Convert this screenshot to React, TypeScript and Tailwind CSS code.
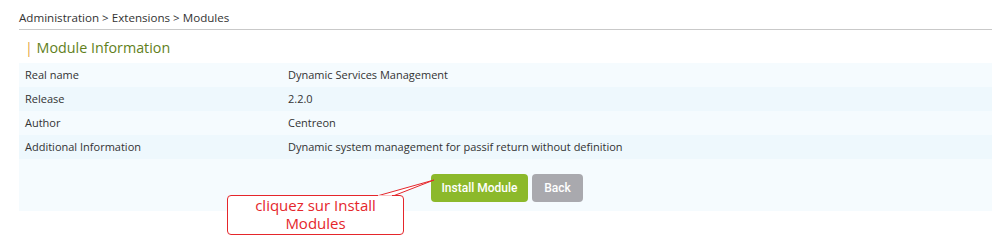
const rows = [
  { label: 'Real name', value: 'Dynamic Services Management' },
  { label: 'Release', value: '2.2.0' },
  { label: 'Author', value: 'Centreon' },
  { label: 'Additional Information', value: 'Dynamic system management for passif return without definition' },
];

export default function App() {
  return (
    <div className="relative w-[1002px] h-[241px] bg-white overflow-hidden font-['Open_Sans',sans-serif] text-[#333]">
      {/* breadcrumb */}
      <div className="pl-[19px] pt-[10px] h-[29px] text-[11.6px] leading-[16px]">
        Administration &gt; Extensions &gt; Modules
      </div>
      <div className="ml-[19px] mr-[10px] border-t border-[#c9c9c9]" />

      {/* title */}
      <h1 className="pl-[25px] pt-[8px] h-[33px] text-[14.3px] leading-[20px] text-[#627f1c]">
        <span className="text-[#e3a53c]">|</span> Module Information
      </h1>

      {/* panel */}
      <div className="ml-[19px] mr-[10px] bg-[#f5fbfe]">
        {rows.map((row, i) => (
          <div
            key={i}
            className={`flex items-center h-[24px] text-[11px] ${i % 2 === 1 ? 'bg-[#eef8fd]' : 'bg-[#f5fbfe]'}`}
          >
            <div className="w-[269px] pl-[6px]">{row.label}</div>
            <div>{row.value}</div>
          </div>
        ))}
        <div className="flex justify-center items-start gap-[4px] h-[52px] pt-[15px] pl-[3px] font-['Roboto',sans-serif]">
          <button className="w-[97px] h-[28px] rounded-[4px] bg-[#8cb92b] text-white text-[12px] font-medium">
            Install Module
          </button>
          <button className="w-[51px] h-[28px] rounded-[4px] bg-[#a9a9ae] text-white text-[12px] font-medium">
            Back
          </button>
        </div>
      </div>

      {/* callout */}
      <svg className="absolute left-0 top-0 pointer-events-none" width="1002" height="241">
        <path d="M377 196 L434 180 L393 196" fill="white" stroke="#e5262b" strokeWidth="1" />
      </svg>
      <div className="absolute left-[227px] top-[195px] w-[177px] h-[40px] border border-[#e5262b] rounded-[4px] bg-white text-[#e5262b] text-[15px] leading-[18px] text-center">
        cliquez sur Install
        <br />
        Modules
      </div>
      <svg className="absolute left-0 top-0 pointer-events-none" width="1002" height="241">
        <path d="M378 196 L392 196" stroke="white" strokeWidth="1.5" />
      </svg>
    </div>
  );
}
